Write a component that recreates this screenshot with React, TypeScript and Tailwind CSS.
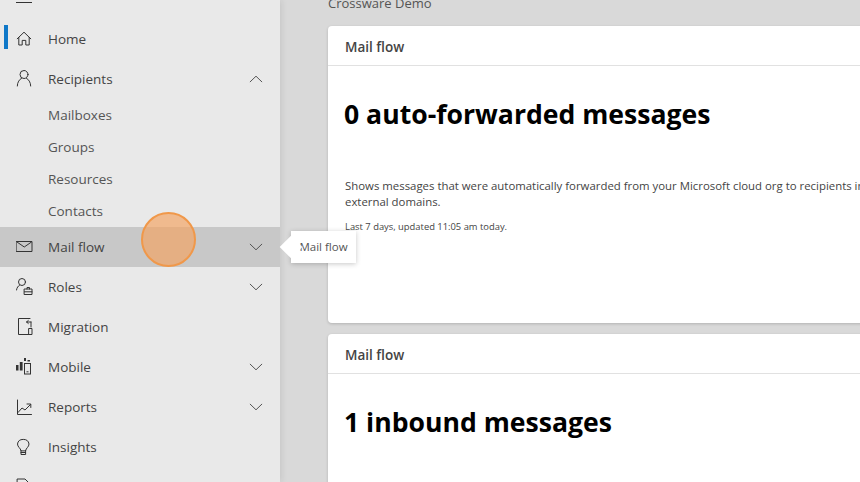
import React from "react";

const P = { fill: "none", stroke: "currentColor", strokeWidth: 1, strokeLinecap: "round" as const, strokeLinejoin: "round" as const };

const Home = () => (
  <svg width="18" height="18" viewBox="0 0 18 18" {...P}>
    <path d="M1.200 8.800 8 2.200 14.800 8.800M2.800 7.400V15H6.200V10.400H9.800V15H13.200V7.400" />
  </svg>
);
const Person = () => (
  <svg width="18" height="18" viewBox="0 0 18 18" {...P}>
    <circle cx="8" cy="4.500" r="4" />
    <path d="M1.300 16C1.300 12.200 3.500 9.300 5.500 8.300M14.700 16C14.700 12.200 12.500 9.300 10.500 8.300" />
  </svg>
);
const Mail = () => (
  <svg width="18" height="18" viewBox="0 0 18 18" {...P}>
    <rect x="0.500" y="3.500" width="15.500" height="10" />
    <path d="M1 4 8.250 9 15.500 4" />
  </svg>
);
const Roles = () => (
  <svg width="18" height="18" viewBox="0 0 18 18" {...P}>
    <circle cx="6" cy="4" r="3.500" />
    <path d="M.5 12C.9 9.500 2.200 8 3.500 7.200" />
    <rect x="8.500" y="11" width="7.500" height="5.500" />
    <path d="M11 11V9.500h2.500V11M8.500 13.800H16" />
  </svg>
);
const Migration = () => (
  <svg width="18" height="18" viewBox="0 0 18 18" {...P}>
    <path d="M14 .5H2.500V16.500H13" />
    <path d="M15 4H10.500L12.300 2.500M10.500 4 12.300 5.500M15 4V9" />
    <rect x="13" y="10.500" width="3" height="6" />
  </svg>
);
const Mobile = () => (
  <svg width="18" height="18" viewBox="0 0 18 18" fill="none">
    <path fill="currentColor" d="M0 7h2.500v5.500H0zM3.800 4h2.800v8.500H3.800zM8 0h2v3H8zM11.500 2H14v1.500h-2.500z" />
    <rect x="8.500" y="5.500" width="6" height="10.500" stroke="currentColor" />
    <path d="M10.500 13.800h2" stroke="currentColor" />
  </svg>
);
const Reports = () => (
  <svg width="18" height="18" viewBox="0 0 18 18" {...P}>
    <path d="M1.500 2V16.500H15.500" />
    <path d="M2 14.500 6 10 9 12 14.500 6.500M11 6h3.800v3.500" />
  </svg>
);
const Bulb = () => (
  <svg width="18" height="18" viewBox="0 0 18 18" {...P}>
    <path d="M5 12.500C4.600 10 1.500 9 1.500 6A5.800 5.300 0 0 1 13 6C13 9 10 10 9.600 12.500ZM5 12.500V16.500H9.600V12.500M5 14.500H9.600" />
  </svg>
);
const Doc = () => (
  <svg width="18" height="18" viewBox="0 0 18 18" {...P}>
    <path d="M1.500 1H9l4 4v12H1.500z" />
  </svg>
);
const Chevron = ({ up }: { up?: boolean }) => (
  <svg width="14" height="8" viewBox="0 0 14 8" {...P} className="text-[#555]">
    <path d={up ? "M1.200 6.800 7 1.200l5.800 5.600" : "M1.200 1.200 7 6.800l5.800-5.600"} />
  </svg>
);

function NavRow({
  icon,
  label,
  chevron,
  up,
  active,
  hover,
}: {
  icon: React.ReactNode;
  label: string;
  chevron?: boolean;
  up?: boolean;
  active?: boolean;
  hover?: boolean;
}) {
  return (
    <div className={`relative flex h-10 shrink-0 items-center pl-4 pr-[17px] ${hover ? "bg-[#c8c8c8]" : ""}`}>
      {active && <div className="absolute left-1 top-[6px] h-6 w-1 bg-[#0f78c8]" />}
      <span className="flex w-8 shrink-0 text-[#333]">{icon}</span>
      <span className="flex-1 text-[13.500px] text-[#444]">{label}</span>
      {chevron && <Chevron up={up} />}
    </div>
  );
}

const SubRow = ({ label }: { label: string }) => (
  <div className="flex h-8 shrink-0 items-center pl-12 text-[13.500px] text-[#555]">{label}</div>
);

function Card({ title, heading, children, className }: { title: string; heading: string; children?: React.ReactNode; className?: string }) {
  return (
    <div className={`w-[600px] shrink-0 rounded-[4px] bg-white shadow-[0_1px_3px_rgba(0,0,0,0.18)] ${className ?? ""}`}>
      <div className="flex h-10 items-center border-b border-[#e1e1e1] pl-[17px] pt-[3px] text-[13.500px] font-semibold text-[#444]">{title}</div>
      <div className="pl-4 pt-[28px]">
        <h2 className="text-[26.600px] font-bold leading-[40px] text-black">{heading}</h2>
        {children}
      </div>
    </div>
  );
}

export default function App() {
  return (
    <div className="relative flex h-[482px] w-[860px] overflow-hidden bg-[#d9d9d9] font-['Open_Sans','Noto_Sans',sans-serif]">
      <aside className="flex w-[280px] shrink-0 flex-col bg-[#e9e9e9] pt-[19px] shadow-[2px_0_6px_rgba(0,0,0,0.08)]">
        <NavRow icon={<Home />} label="Home" active />
        <NavRow icon={<Person />} label="Recipients" chevron up />
        <SubRow label="Mailboxes" />
        <SubRow label="Groups" />
        <SubRow label="Resources" />
        <SubRow label="Contacts" />
        <NavRow icon={<Mail />} label="Mail flow" chevron hover />
        <NavRow icon={<Roles />} label="Roles" chevron />
        <NavRow icon={<Migration />} label="Migration" />
        <NavRow icon={<Mobile />} label="Mobile" chevron />
        <NavRow icon={<Reports />} label="Reports" chevron />
        <NavRow icon={<Bulb />} label="Insights" />
        <NavRow icon={<Doc />} label="" />
      </aside>

      <main className="flex min-w-0 flex-1 flex-col pl-12">
        <div className="-mt-[7px] h-[33px] shrink-0 text-[13px] leading-[20px] text-[#555]">Crossware Demo</div>
        <Card title="Mail flow" heading="0 auto-forwarded messages" className="h-[297px]">
          <p className="ml-px mt-[44px] w-[530px] text-[11.400px] leading-[16px] text-[#444]">
            Shows messages that were automatically forwarded from your Microsoft cloud org to recipients in external domains.
          </p>
          <p className="ml-px mt-[11px] text-[9.400px] leading-[12px] text-[#444]">Last 7 days, updated 11:05 am today.</p>
        </Card>
        <Card title="Mail flow" heading="1 inbound messages" className="mt-[11px] h-[297px]" />
      </main>

      {/* Hamburger's last bar, cut off by the top edge */}
      <div className="absolute left-4 top-[2px] h-px w-4 bg-[#333]" />

      {/* Click marker */}
      <div className="absolute left-[141px] top-[212px] h-[55px] w-[55px] rounded-full border-2 border-[#f0984a] bg-[#f5a25d]/65" />

      {/* Tooltip */}
      <div className="absolute left-[291px] top-[231px] flex h-[32px] w-[65px] items-center justify-center bg-white text-[11.500px] text-[#555] shadow-[0_1px_5px_rgba(0,0,0,0.22)]">
        Mail flow
        <div className="absolute -left-[8px] top-[8px] h-4 w-4 rotate-45 bg-white" />
      </div>
    </div>
  );
}
